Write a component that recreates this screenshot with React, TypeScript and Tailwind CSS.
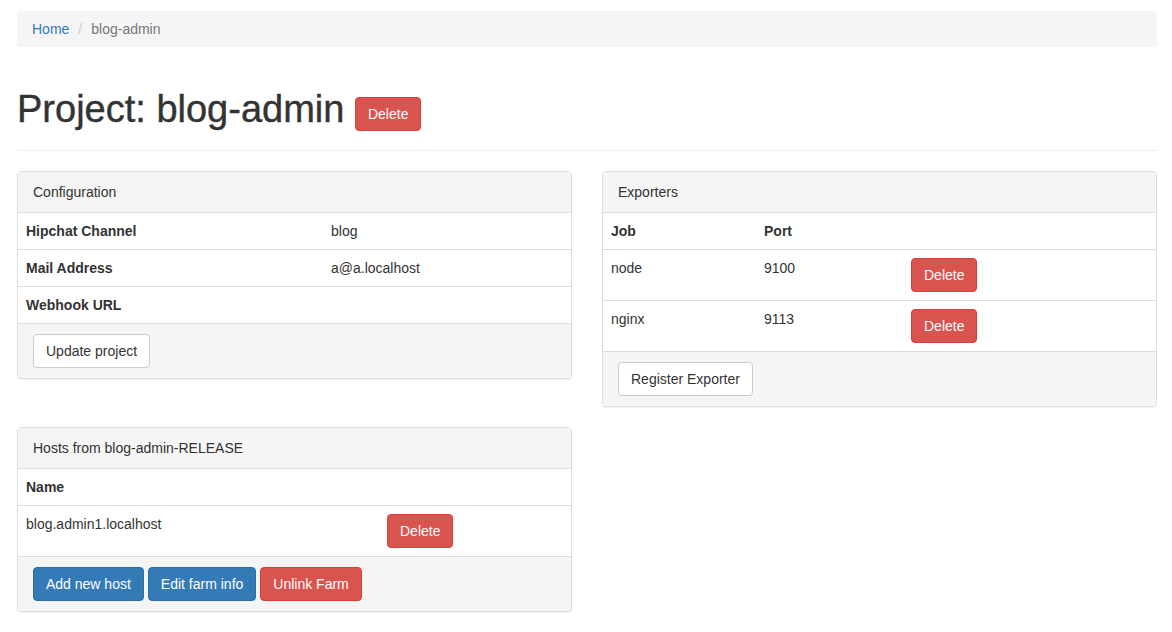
import React from 'react';

type Variant = 'default' | 'primary' | 'danger';

const variantClass: Record<Variant, string> = {
    default: 'bg-white border-[#ccc] text-[#333]',
    primary: 'bg-[#337ab7] border-[#2e6da4] text-white',
    danger: 'bg-[#d9534f] border-[#d43f3a] text-white',
};

const Btn = ({ children, variant = 'default', className = 'align-middle' }: { children: React.ReactNode; variant?: Variant; className?: string }) => (
    <button className={`inline-block px-3 py-1.5 text-sm leading-5 font-normal rounded border whitespace-nowrap ${variantClass[variant]} ${className}`}>
        {children}
    </button>
);

const Panel = ({ title, children, footer, className = '' }: { title: string; children: React.ReactNode; footer: React.ReactNode; className?: string }) => (
    <div className={`border border-[#ddd] rounded bg-white shadow-[0_1px_1px_rgba(0,0,0,0.05)] ${className}`}>
        <div className="px-[15px] py-2.5 leading-5 bg-[#f5f5f5] border-b border-[#ddd] rounded-t-[3px]">{title}</div>
        {children}
        <div className="px-[15px] py-2.5 bg-[#f5f5f5] border-t border-[#ddd] rounded-b-[3px] flex gap-1">{footer}</div>
    </div>
);

// simple table row: cells laid out with fixed widths
const Row = ({ cells, widths, first = false, bold = false }: { cells: React.ReactNode[]; widths: string[]; first?: boolean; bold?: boolean }) => (
    <div className={`flex ${first ? '' : 'border-t border-[#ddd]'} ${bold ? 'font-bold' : ''}`}>
        {cells.map((c, i) => (
            <div key={i} className={`p-2 leading-5 ${widths[i]}`}>{c}</div>
        ))}
    </div>
);

const App = () => {
    const configWidths = ['w-[305px]', 'flex-1'];
    const expWidths = ['w-[153px]', 'w-[147px]', 'flex-1'];
    const hostWidths = ['w-[361px]', 'flex-1'];

    return (
        <div className="min-h-screen bg-white text-[#333] text-sm leading-5 font-['Liberation_Sans',Arial,sans-serif] pl-[17px] pr-[15px] pt-[11px]">
            {/* Breadcrumb */}
            <div className="flex h-9 items-center px-[15px] bg-[#f5f5f5] rounded">
                <a className="text-[#337ab7]">Home</a>
                <span className="px-[9px] text-[#ccc]">/</span>
                <span className="text-[#777]">blog-admin</span>
            </div>

            {/* Page header */}
            <div className="mt-[42px] pb-[21px] border-b border-[#eee]">
                <h1 className="h-10 text-[38px] leading-[40px] font-normal [-webkit-text-stroke:0.4px_#333]">
                    Project: blog-admin{' '}
                    <Btn variant="danger" className="align-[3px] [-webkit-text-stroke:0]">Delete</Btn>
                </h1>
            </div>

            <div className="grid grid-cols-2 gap-[30px] mt-5 items-start">
                <div>
                    <Panel title="Configuration" footer={<Btn>Update project</Btn>}>
                        <Row first widths={configWidths} cells={[<b>Hipchat Channel</b>, 'blog']} />
                        <Row widths={configWidths} cells={[<b>Mail Address</b>, 'a@a.localhost']} />
                        <Row widths={configWidths} cells={[<b>Webhook URL</b>, '']} />
                    </Panel>

                    <Panel
                        className="mt-[48px]"
                        title="Hosts from blog-admin-RELEASE"
                        footer={
                            <>
                                <Btn variant="primary">Add new host</Btn>
                                <Btn variant="primary">Edit farm info</Btn>
                                <Btn variant="danger">Unlink Farm</Btn>
                            </>
                        }
                    >
                        <Row first bold widths={hostWidths} cells={['Name', '']} />
                        <Row widths={hostWidths} cells={['blog.admin1.localhost', <Btn variant="danger">Delete</Btn>]} />
                    </Panel>
                </div>

                <Panel title="Exporters" footer={<Btn>Register Exporter</Btn>}>
                    <Row first bold widths={expWidths} cells={['Job', 'Port', '']} />
                    <Row widths={expWidths} cells={['node', '9100', <Btn variant="danger">Delete</Btn>]} />
                    <Row widths={expWidths} cells={['nginx', '9113', <Btn variant="danger">Delete</Btn>]} />
                </Panel>
            </div>
        </div>
    );
};

export default App;
